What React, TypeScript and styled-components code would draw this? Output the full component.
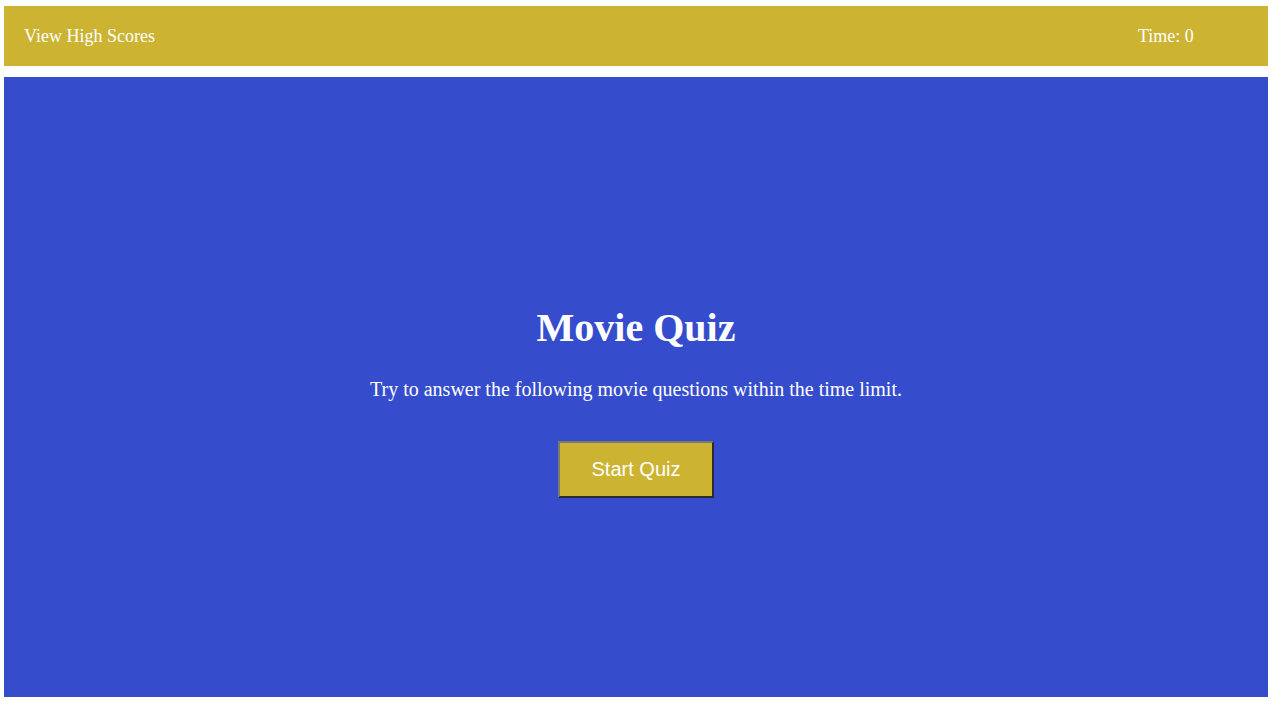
import React from "react";
import styled, { createGlobalStyle } from "styled-components";

const Global = createGlobalStyle`
  html, body { margin: 0; padding: 0; background: #ffffff; }
  body { font-family: "Liberation Serif", "Times New Roman", serif; }
`;

const Page = styled.div`
  display: flex;
  flex-direction: column;
  gap: 11px;
  padding: 6px 5px 9px 4px;
  height: 706px;
  box-sizing: border-box;
`;

const Header = styled.header`
  display: flex;
  align-items: center;
  justify-content: space-between;
  box-sizing: border-box;
  height: 60px;
  padding: 1px 20px 0;
  background: #cdb332;
  color: #ffffff;
  font-size: 18px;
  flex-shrink: 0;
`;

const NavLink = styled.span`
  cursor: pointer;
`;

const Timer = styled.span`
  width: 110px;
`;

const Main = styled.main`
  flex: 1;
  background: #354dcd;
  color: #ffffff;
  display: flex;
  flex-direction: column;
  align-items: center;
  justify-content: center;
  text-align: center;
  padding-top: 27px;
`;

const Title = styled.h1`
  font-size: 40px;
  font-weight: bold;
  margin: 0 0 27px;
`;

const Intro = styled.p`
  font-size: 20px;
  margin: 0 0 40px;
`;

const StartButton = styled.button`
  font-family: "Liberation Sans", Arial, sans-serif;
  font-size: 20px;
  color: #ffffff;
  background: #cdb332;
  padding: 15px 32px;
  border: 2px solid;
  border-color: #7a7a6e #2b2b2b #2b2b2b #7a7a6e;
  cursor: pointer;
`;

export default function App() {
  return (
    <>
      <Global />
      <Page>
        <Header>
          <NavLink>View High Scores</NavLink>
          <Timer>Time: 0</Timer>
        </Header>
        <Main>
          <Title>Movie Quiz</Title>
          <Intro>Try to answer the following movie questions within the time limit.</Intro>
          <StartButton>Start Quiz</StartButton>
        </Main>
      </Page>
    </>
  );
}
